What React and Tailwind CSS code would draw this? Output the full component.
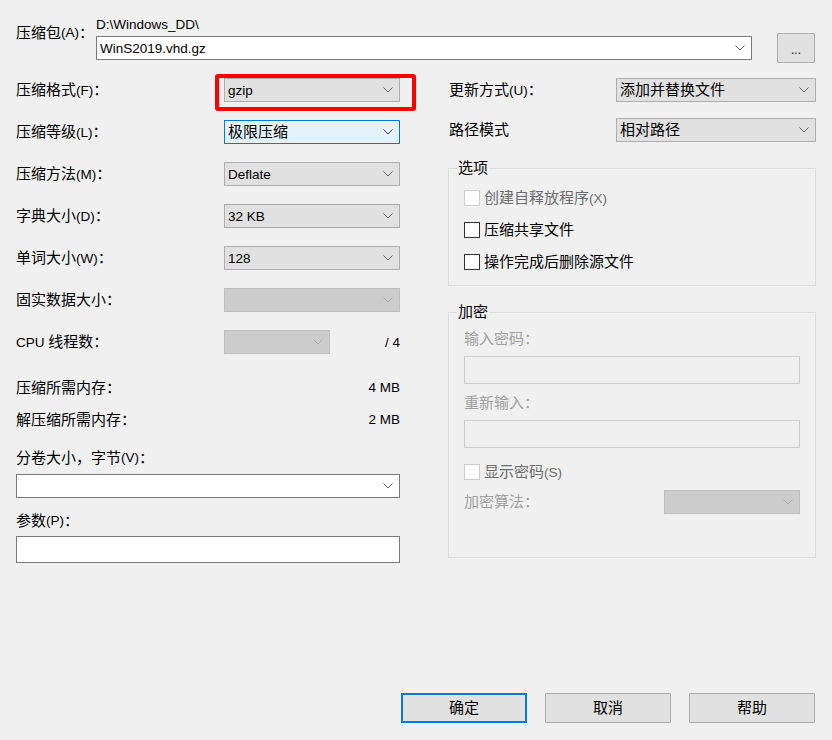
import React from "react";

const CJK = /([\u2E80-\u9FFF\uFF00-\uFFEF\u3000-\u303F]+)/;

function T({ s }) {
  return (
    <>
      {s
        .split(CJK)
        .filter(Boolean)
        .map((p, i) =>
          CJK.test(p) ? (
            <span key={i} className="text-[15px]">{p}</span>
          ) : (
            <span key={i} className="text-[13.5px]">{p}</span>
          )
        )}
    </>
  );
}

function Chevron({ color }) {
  return (
    <svg width="10" height="6" viewBox="0 0 10 6" className="shrink-0">
      <path d="M0.5 0.5 L5 5 L9.5 0.5" fill="none" stroke={color} strokeWidth="1" />
    </svg>
  );
}

const comboStyles = {
  normal: "bg-[#e1e1e1] border-[#adadad]",
  focus: "bg-[#e5f1fb] border-[#0078d7]",
  disabled: "bg-[#cccccc] border-[#bfbfbf]",
  white: "bg-white border-[#7a7a7a]",
};
const chevColor = {
  normal: "#606060",
  focus: "#333333",
  disabled: "#a8a8a8",
  white: "#606060",
};

function Combo({ value = "", variant = "normal", className = "" }) {
  return (
    <div
      className={`flex items-center justify-between border pl-[3px] pr-[6px] h-[24px] ${comboStyles[variant]} ${className}`}
    >
      <span className="truncate">
        <T s={value} />
      </span>
      <Chevron color={chevColor[variant]} />
    </div>
  );
}

function Row({ label, children }) {
  return (
    <div className="flex items-center justify-between h-[42px]">
      <span>
        <T s={label} />
      </span>
      {children}
    </div>
  );
}

function Check({ label, disabled }) {
  return (
    <div className="flex items-center h-[32px]">
      <div
        className={`w-4 h-4 border ${disabled ? "border-[#cccccc] bg-white" : "border-[#333333] bg-white"}`}
      />
      <span className={`ml-[4px] ${disabled ? "text-[#6d6d6d]" : "text-black"}`}>
        <T s={label} />
      </span>
    </div>
  );
}

function Button({ label, primary }) {
  return (
    <div
      className={`w-[126px] h-[30px] flex items-center justify-center bg-[#e1e1e1] ${
        primary ? "border-2 border-[#0078d7]" : "border border-[#adadad]"
      }`}
    >
      <T s={label} />
    </div>
  );
}

export default function App() {
  return (
    <div className="relative w-[832px] h-[740px] bg-[#f0f0f0] text-black leading-[20px] font-['Liberation_Sans','Noto_Sans_CJK_SC',sans-serif] flex flex-col overflow-hidden">
      {/* Header */}
      <div className="flex pt-[13px] pl-4 pr-[17px]">
        <div className="w-[80px] h-[22px] mt-[9px] flex items-center">
          <T s="压缩包(A)：" />
        </div>
        <div className="w-[656px] flex flex-col">
          <div className="h-[23px] flex items-center">
            <T s="D:\Windows_DD\" />
          </div>
          <Combo value="WinS2019.vhd.gz" variant="white" />
        </div>
        <div className="ml-[25px] mt-[20px] w-[38px] h-[30px] bg-[#e1e1e1] border border-[#adadad] flex items-center justify-center">
          <span className="text-[12px] leading-none pt-[4px]">...</span>
        </div>
      </div>

      {/* Body */}
      <div className="flex pl-4 mt-[6px]">
        {/* Left column */}
        <div className="w-[384px] flex flex-col">
          <Row label="压缩格式(F)：">
            <Combo value="gzip" className="w-[176px]" />
          </Row>
          <Row label="压缩等级(L)：">
            <Combo value="极限压缩" variant="focus" className="w-[176px]" />
          </Row>
          <Row label="压缩方法(M)：">
            <Combo value="Deflate" className="w-[176px]" />
          </Row>
          <Row label="字典大小(D)：">
            <Combo value="32 KB" className="w-[176px]" />
          </Row>
          <Row label="单词大小(W)：">
            <Combo value="128" className="w-[176px]" />
          </Row>
          <Row label="固实数据大小：">
            <Combo variant="disabled" className="w-[176px]" />
          </Row>
          <div className="flex items-center h-[42px]">
            <span className="w-[208px]">
              <T s="CPU 线程数：" />
            </span>
            <Combo variant="disabled" className="w-[106px]" />
            <span className="flex-1 text-right">
              <T s="/ 4" />
            </span>
          </div>
          <div className="mt-[9px] flex items-center justify-between h-[32px]">
            <T s="压缩所需内存：" />
            <T s="4 MB" />
          </div>
          <div className="flex items-center justify-between h-[32px]">
            <T s="解压缩所需内存：" />
            <T s="2 MB" />
          </div>
          <div className="mt-[10px] h-[24px] flex items-center">
            <T s="分卷大小，字节(V)：" />
          </div>
          <Combo variant="white" className="mt-[4px]" />
          <div className="mt-[11px] h-[24px] flex items-center">
            <T s="参数(P)：" />
          </div>
          <div className="mt-[3px] h-[27px] bg-white border border-[#7a7a7a]" />
        </div>

        {/* Right column */}
        <div className="ml-[48px] w-[368px] flex flex-col">
          <div className="flex items-center justify-between h-[42px]">
            <span className="pl-[1px]">
              <T s="更新方式(U)：" />
            </span>
            <Combo value="添加并替换文件" className="w-[200px]" />
          </div>
          <div className="flex items-center justify-between h-[38px]">
            <span className="pl-[1px]">
              <T s="路径模式" />
            </span>
            <Combo value="相对路径" className="w-[200px]" />
          </div>

          {/* Options group */}
          <div className="relative mt-[19px] h-[118px] border border-[#dcdcdc] pl-[15px] pt-[13px]">
            <div className="absolute left-[8px] top-[-11px] h-[20px] px-[1px] bg-[#f0f0f0] flex items-center">
              <T s="选项" />
            </div>
            <Check label="创建自释放程序(X)" disabled />
            <Check label="压缩共享文件" />
            <Check label="操作完成后删除源文件" />
          </div>

          {/* Encryption group */}
          <div className="relative mt-[26px] h-[246px] border border-[#dcdcdc] px-[15px] pt-[14px] flex flex-col">
            <div className="absolute left-[8px] top-[-11px] h-[20px] px-[1px] bg-[#f0f0f0] flex items-center">
              <T s="加密" />
            </div>
            <div className="h-[24px] flex items-center text-[#a0a0a0]">
              <T s="输入密码：" />
            </div>
            <div className="mt-[5px] h-[28px] border border-[#cccccc]" />
            <div className="mt-[7px] h-[24px] flex items-center text-[#a0a0a0]">
              <T s="重新输入：" />
            </div>
            <div className="mt-[5px] h-[28px] border border-[#cccccc]" />
            <div className="mt-[12px] h-[24px] flex items-center">
              <div className="w-4 h-4 border border-[#cccccc] bg-white" />
              <span className="ml-[4px] text-[#6d6d6d]">
                <T s="显示密码(S)" />
              </span>
            </div>
            <div className="mt-[6px] h-[24px] flex items-center justify-between">
              <span className="text-[#a0a0a0]">
                <T s="加密算法：" />
              </span>
              <Combo variant="disabled" className="w-[136px]" />
            </div>
          </div>
        </div>
      </div>

      {/* Footer buttons */}
      <div className="mt-auto flex justify-end gap-[18px] pr-[17px] pb-[17px]">
        <Button label="确定" primary />
        <Button label="取消" />
        <Button label="帮助" />
      </div>

      {/* Red annotation box */}
      <div className="absolute left-[215px] top-[74px] w-[201px] h-[37px] border-4 border-[#ff0000] rounded-[3px] pointer-events-none" />
    </div>
  );
}
